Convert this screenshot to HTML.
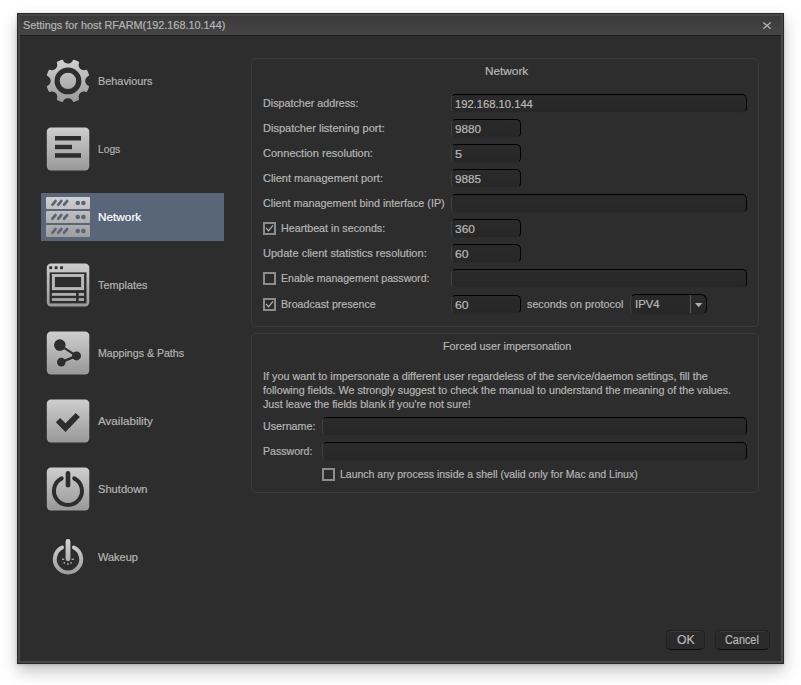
<!DOCTYPE html>
<html lang="en">
<head>
<meta charset="utf-8">
<title>Settings for host RFARM(192.168.10.144)</title>
<style>
html,body{margin:0;padding:0;background:#fff;}
body{width:801px;height:685px;position:relative;overflow:hidden;
  font-family:"Liberation Sans",sans-serif;font-size:11px;color:#b5b5b5;}
*{box-sizing:border-box;}
.abs{position:absolute;}
#win{position:absolute;left:17px;top:13px;width:767px;height:651px;background:#474747;
  border:1px solid #272727;box-shadow:0 7px 15px rgba(0,0,0,.24),0 1px 3px rgba(0,0,0,.18);}
#titlebar{position:absolute;left:2px;top:2px;right:2px;height:19px;
  background:linear-gradient(#3a3a3a,#454545);}
#titleline{position:absolute;left:2px;right:2px;top:21px;height:1px;background:#1c1c1c;}
#content{position:absolute;left:2px;right:2px;top:22px;bottom:2px;background:#2d2d2d;}
.t{position:absolute;white-space:nowrap;line-height:14px;height:14px;transform-origin:0 0;-webkit-text-stroke:0.2px;}
.side{color:#b4b4b4;}
.sel{position:absolute;left:41px;top:193px;width:183px;height:48px;background:#596679;}
.grp{position:absolute;border:1px solid #3a3a3a;border-radius:5px;}
.inp{position:absolute;height:19px;background:linear-gradient(#2a2a2a,#272727);border-radius:5px;
  border:1px solid #000;border-left-color:#404040;border-bottom-color:#2b2b2b;}
.cb{position:absolute;width:13px;height:13px;border:2px solid #8c8c8c;background:#2b2b2b;}
.btn{position:absolute;height:20px;border-radius:5px;background:#2a2a2a;
  border:1px solid #202020;border-bottom-color:#0e0e0e;box-shadow:inset 0 1px 0 #373737;}
svg{position:absolute;overflow:visible;}
</style>
</head>
<body>
<div id="win">
  <div id="titlebar"></div>
  <div id="titleline"></div>
  <div id="content"></div>
</div>

<!-- title -->
<svg style="left:762px;top:21px" width="10" height="9" viewBox="0 0 10 9"><path d="M1.3 1.5 L8.7 7.7 M8.7 1.5 L1.3 7.7" stroke="#b2b2b2" stroke-width="1.35" fill="none"/></svg>

<!-- sidebar -->
<div class="sel"></div>

<svg id="icons" style="left:0;top:0" width="801" height="685" viewBox="0 0 801 685">
  <defs>
    <linearGradient id="g" x1="0" y1="0" x2="0" y2="1"><stop offset="0" stop-color="#cecece"/><stop offset="1" stop-color="#989898"/></linearGradient>
    <linearGradient id="gn" gradientUnits="userSpaceOnUse" x1="0" y1="197" x2="0" y2="237"><stop offset="0" stop-color="#d0d0d0"/><stop offset="1" stop-color="#9e9e9e"/></linearGradient>
    <linearGradient id="gg" gradientUnits="userSpaceOnUse" x1="0" y1="59" x2="0" y2="103"><stop offset="0" stop-color="#d2d2d2"/><stop offset="1" stop-color="#989898"/></linearGradient>
    <linearGradient id="gw" gradientUnits="userSpaceOnUse" x1="0" y1="539" x2="0" y2="575"><stop offset="0" stop-color="#d6d6d6"/><stop offset="1" stop-color="#9a9a9a"/></linearGradient>
  </defs>
  <!-- gear -->
  <g id="gear">
    <path d="M48.01 85.48 L47.10 85.99 L46.90 86.31 L46.85 86.67 L46.99 87.24 L47.34 88.30 L48.14 90.24 L48.84 91.59 L49.08 91.86 L49.40 92.01 L49.77 92.03 L50.92 91.69 L51.95 91.58 L52.65 91.62 L53.36 91.77 L54.30 92.12 L54.93 92.48 L55.73 93.14 L56.37 93.92 L56.87 94.87 L57.09 95.52 L57.22 96.17 L57.27 96.87 L57.22 97.59 L56.81 99.24 L56.99 99.76 L57.26 100.01 L59.59 101.14 L61.57 101.85 L61.99 101.97 L62.35 101.99 L62.70 101.87 L62.96 101.63 L63.54 100.57 L64.19 99.76 L64.71 99.30 L65.29 98.92 L65.94 98.60 L66.90 98.31 L67.62 98.21 L68.63 98.24 L69.31 98.38 L69.96 98.60 L70.91 99.10 L71.69 99.74 L72.15 100.26 L73.04 101.75 L73.54 101.99 L73.91 101.97 L76.35 101.12 L78.25 100.22 L78.64 100.01 L78.91 99.77 L79.06 99.45 L79.08 99.08 L78.74 97.93 L78.63 96.90 L78.67 96.20 L78.81 95.52 L79.04 94.84 L79.52 93.95 L79.96 93.38 L80.69 92.69 L81.27 92.30 L81.92 91.98 L82.57 91.76 L83.25 91.62 L83.92 91.58 L84.61 91.62 L85.29 91.76 L86.11 92.03 L86.48 92.02 L86.95 91.74 L87.25 91.24 L87.76 90.24 L88.56 88.30 L89.02 86.86 L89.04 86.50 L88.92 86.15 L88.68 85.89 L87.62 85.31 L86.81 84.66 L86.35 84.14 L85.97 83.56 L85.65 82.91 L85.36 81.95 L85.26 81.23 L85.29 80.22 L85.43 79.54 L85.65 78.89 L86.15 77.94 L86.79 77.16 L87.31 76.70 L88.80 75.81 L89.04 75.31 L89.02 74.94 L88.17 72.50 L87.27 70.60 L87.06 70.21 L86.82 69.94 L86.50 69.79 L86.13 69.77 L84.98 70.11 L83.95 70.22 L83.25 70.18 L82.57 70.04 L81.89 69.81 L81.00 69.33 L80.43 68.89 L79.74 68.16 L79.35 67.58 L79.03 66.93 L78.81 66.28 L78.67 65.60 L78.63 64.90 L78.67 64.24 L78.81 63.56 L79.08 62.74 L79.07 62.37 L78.79 61.90 L78.29 61.60 L77.29 61.09 L75.35 60.29 L73.91 59.83 L73.55 59.81 L73.20 59.93 L72.94 60.17 L72.36 61.23 L71.71 62.04 L71.19 62.50 L70.61 62.88 L69.96 63.20 L69.00 63.49 L68.28 63.59 L67.27 63.56 L66.23 63.31 L65.59 63.05 L64.99 62.70 L64.44 62.27 L63.75 61.54 L62.86 60.05 L62.36 59.81 L61.99 59.83 L59.55 60.68 L57.65 61.58 L57.26 61.79 L56.99 62.03 L56.84 62.35 L56.82 62.72 L57.16 63.87 L57.27 64.90 L57.23 65.60 L57.09 66.28 L56.86 66.96 L56.38 67.85 L55.94 68.42 L55.21 69.11 L54.63 69.50 L54.01 69.81 L53.33 70.04 L52.65 70.18 L51.98 70.22 L51.29 70.18 L50.61 70.04 L49.79 69.77 L49.42 69.78 L48.95 70.06 L48.65 70.56 L48.14 71.56 L47.34 73.50 L46.88 74.94 L46.86 75.30 L47.09 75.79 L48.59 76.70 L49.32 77.39 L49.76 77.97 L50.24 78.86 L50.47 79.54 L50.64 80.54 L50.64 81.26 L50.54 81.95 L50.25 82.91 L49.95 83.54 L49.56 84.11 L49.11 84.64 L48.59 85.10 Z" fill="url(#gg)"/>
    <circle cx="67.95" cy="80.9" r="10.8" fill="none" stroke="#2d2d2d" stroke-width="5.2"/>
  </g>
  <!-- logs -->
  <rect x="46.8" y="127.6" width="42.5" height="42.8" rx="4.2" fill="url(#g)"/>
  <rect x="55" y="136" width="26" height="4.5" fill="#2d2d2d"/>
  <rect x="55" y="144.8" width="17" height="4.4" fill="#2d2d2d"/>
  <rect x="55" y="153.2" width="26" height="4.5" fill="#2d2d2d"/>
  <!-- network -->
  <g fill="url(#gn)">
    <rect x="46" y="197" width="44" height="12" rx="1"/>
    <rect x="46" y="211" width="44" height="12" rx="1"/>
    <rect x="46" y="225" width="44" height="12" rx="1"/>
  </g>
  <g stroke="#596679" stroke-width="2.8" stroke-linecap="round" fill="#596679">
    <path d="M52.5 204.7 L55.5 201.10000000000002 M58.3 204.7 L61.3 201.10000000000002 M64.1 204.7 L67.1 201.10000000000002"/>
    <path d="M52.5 218.7 L55.5 215.10000000000002 M58.3 218.7 L61.3 215.10000000000002 M64.1 218.7 L67.1 215.10000000000002"/>
    <path d="M52.5 232.7 L55.5 229.10000000000002 M58.3 232.7 L61.3 229.10000000000002 M64.1 232.7 L67.1 229.10000000000002"/>
  </g>
  <g fill="#596679">
    <circle cx="77.8" cy="203" r="2.3"/><circle cx="83.4" cy="203" r="2.3"/>
    <circle cx="77.8" cy="217" r="2.3"/><circle cx="83.4" cy="217" r="2.3"/>
    <circle cx="77.8" cy="231" r="2.3"/><circle cx="83.4" cy="231" r="2.3"/>
  </g>
  <!-- templates -->
  <rect x="46.8" y="263.6" width="42.5" height="42.8" rx="4.2" fill="url(#g)"/>
  <rect x="49.6" y="272.4" width="36.9" height="31" fill="#2d2d2d"/>
  <rect x="49.3" y="266.3" width="2.8" height="2.8" fill="#2d2d2d"/>
  <rect x="54.7" y="266.3" width="2.8" height="2.8" fill="#2d2d2d"/>
  <rect x="60.1" y="266.3" width="2.8" height="2.8" fill="#2d2d2d"/>
  <rect x="53.4" y="275.5" width="29.2" height="13.1" fill="none" stroke="#b8b8b8" stroke-width="3"/>
  <rect x="51.9" y="293" width="24.2" height="2.8" fill="#adadad"/>
  <rect x="78.7" y="293" width="5.3" height="2.8" fill="#adadad"/>
  <rect x="51.9" y="298.1" width="24.2" height="2.9" fill="#a5a5a5"/>
  <rect x="78.7" y="298.1" width="5.3" height="2.9" fill="#a5a5a5"/>
  <!-- mappings -->
  <rect x="46.8" y="331.6" width="42.5" height="42.8" rx="4.2" fill="url(#g)"/>
  <g fill="#2d2d2d" stroke="#2d2d2d">
    <path d="M59.8 345.1 L76.5 355.9 L61.3 362.1" fill="none" stroke-width="2.3"/>
    <circle cx="59.8" cy="345.1" r="5.8" stroke="none"/>
    <circle cx="76.5" cy="355.9" r="4.5" stroke="none"/>
    <circle cx="61.3" cy="362.1" r="4.3" stroke="none"/>
  </g>
  <!-- availability -->
  <rect x="46.8" y="399.6" width="42.5" height="42.8" rx="4.2" fill="url(#g)"/>
  <path d="M55.8 422.3 L60.1 418.1 L65.5 423.3 L75.7 413 L79.9 417.1 L65.5 431.9 Z" fill="#2d2d2d"/>
  <!-- shutdown -->
  <rect x="46.8" y="467.6" width="42.5" height="42.8" rx="4.2" fill="url(#g)"/>
  <g fill="none" stroke="#2d2d2d" stroke-linecap="round">
    <path d="M61.7 478.4 A14 14 0 1 0 74.2 478.4" stroke-width="4"/>
    <path d="M68 473.3 L68 485.2" stroke-width="4.6"/>
  </g>
  <!-- wakeup -->
  <g fill="none" stroke="url(#gw)" stroke-linecap="round">
    <path d="M62.1 547.5 A13.2 13.2 0 1 0 73.9 547.5" stroke-width="4"/>
    <path d="M68 541.5 L68 558.8" stroke-width="4.8"/>
  </g>
  <g fill="#a8a8a8">
    <rect x="62" y="558.6" width="2.2" height="1.4"/><rect x="71.6" y="558.6" width="2.2" height="1.4"/>
    <rect x="63.6" y="562" width="1.5" height="1.6"/><rect x="67.2" y="563.2" width="1.5" height="1.7"/><rect x="70.4" y="562" width="1.5" height="1.6"/>
  </g>
</svg>

<!-- group 1 -->
<div class="grp" style="left:251px;top:58px;width:508px;height:269px;"></div>

<div class="inp" style="left:451px;top:94px;width:296px;"></div>
<div class="inp" style="left:451px;top:119px;width:70px;"></div>
<div class="inp" style="left:451px;top:144px;width:70px;"></div>
<div class="inp" style="left:451px;top:169px;width:70px;"></div>
<div class="inp" style="left:451px;top:194px;width:296px;"></div>
<div class="inp" style="left:451px;top:219px;width:70px;"></div>
<div class="inp" style="left:451px;top:244px;width:70px;"></div>
<div class="inp" style="left:451px;top:269px;width:296px;"></div>
<div class="inp" style="left:451px;top:295px;width:70px;"></div>

<div class="cb" style="left:263px;top:222px;"></div>
<div class="cb" style="left:263px;top:272px;"></div>
<div class="cb" style="left:263px;top:298px;"></div>
<svg style="left:263px;top:222px" width="13" height="13" viewBox="0 0 13 13"><path d="M3.1 5.9 L5.5 8.8 L10 3.4" stroke="#bcbcbc" stroke-width="1.15" fill="none"/></svg>
<svg style="left:263px;top:298px" width="13" height="13" viewBox="0 0 13 13"><path d="M3.1 5.9 L5.5 8.8 L10 3.4" stroke="#bcbcbc" stroke-width="1.15" fill="none"/></svg>

<div class="inp" style="left:630px;top:294px;width:77px;height:21px;border-radius:6px;"></div>
<div class="abs" style="left:690px;top:295px;width:1px;height:18px;background:#5a5a5a;"></div>
<svg style="left:695px;top:303px" width="8" height="5" viewBox="0 0 8 5"><path d="M0 0 L7.4 0 L3.7 4.2 Z" fill="#b0b0b0"/></svg>

<!-- group 2 -->
<div class="grp" style="left:251px;top:333px;width:508px;height:160px;"></div>
<div class="inp" style="left:322px;top:417px;width:425px;"></div>
<div class="inp" style="left:322px;top:442px;width:425px;"></div>
<div class="cb" style="left:322px;top:468px;"></div>

<!-- buttons -->
<div class="btn" style="left:666px;top:630px;width:39px;"></div>
<div class="btn" style="left:715px;top:630px;width:55px;"></div>

<div class="t" style="left:22.70px;top:18px;transform:scaleX(0.9876);color:#b4b4b4;">Settings for host RFARM(192.168.10.144)</div>
<div class="t" style="left:98.20px;top:74px;transform:scaleX(0.9882);color:#b4b4b4;">Behaviours</div>
<div class="t" style="left:98.20px;top:142px;transform:scaleX(0.9305);color:#b4b4b4;">Logs</div>
<div class="t" style="left:98.20px;top:210px;transform:scaleX(1.0708);color:#ffffff;">Network</div>
<div class="t" style="left:97.90px;top:278px;transform:scaleX(0.9872);color:#b4b4b4;">Templates</div>
<div class="t" style="left:98.20px;top:346px;transform:scaleX(0.9632);color:#b4b4b4;">Mappings &amp; Paths</div>
<div class="t" style="left:97.90px;top:414px;transform:scaleX(1.0564);color:#b4b4b4;">Availability</div>
<div class="t" style="left:98.20px;top:482px;transform:scaleX(1.0115);color:#b4b4b4;">Shutdown</div>
<div class="t" style="left:97.90px;top:550px;transform:scaleX(1.0012);color:#b4b4b4;">Wakeup</div>
<div class="t" style="left:484.90px;top:64px;transform:scaleX(1.0708);">Network</div>
<div class="t" style="left:263.15px;top:96px;transform:scaleX(0.9757);">Dispatcher address:</div>
<div class="t" style="left:263.15px;top:121px;transform:scaleX(1.0053);">Dispatcher listening port:</div>
<div class="t" style="left:263.15px;top:146px;transform:scaleX(1.0044);">Connection resolution:</div>
<div class="t" style="left:263.15px;top:171px;transform:scaleX(0.9958);">Client management port:</div>
<div class="t" style="left:263.15px;top:196px;transform:scaleX(0.9808);">Client management bind interface (IP)</div>
<div class="t" style="left:281.40px;top:221px;transform:scaleX(0.9737);">Heartbeat in seconds:</div>
<div class="t" style="left:263.15px;top:246px;transform:scaleX(1.0028);">Update client statistics resolution:</div>
<div class="t" style="left:281.40px;top:271px;transform:scaleX(0.9595);">Enable management password:</div>
<div class="t" style="left:281.40px;top:296.5px;transform:scaleX(0.9679);">Broadcast presence</div>
<div class="t" style="left:526.80px;top:296.5px;transform:scaleX(0.9781);">seconds on protocol</div>
<div class="t" style="left:635.20px;top:296.5px;transform:scaleX(1.0310);color:#b8b8b8;">IPV4</div>
<div class="t" style="left:455.00px;top:97px;transform:scaleX(1.0181);color:#b8b8b8;">192.168.10.144</div>
<div class="t" style="left:455.00px;top:122px;transform:scaleX(1.0660);color:#b8b8b8;">9880</div>
<div class="t" style="left:455.00px;top:147px;transform:scaleX(1.1592);color:#b8b8b8;">5</div>
<div class="t" style="left:455.00px;top:172px;transform:scaleX(1.0660);color:#b8b8b8;">9885</div>
<div class="t" style="left:455.00px;top:222px;transform:scaleX(1.0839);color:#b8b8b8;">360</div>
<div class="t" style="left:455.00px;top:247px;transform:scaleX(1.1102);color:#b8b8b8;">60</div>
<div class="t" style="left:455.00px;top:297.5px;transform:scaleX(1.1102);color:#b8b8b8;">60</div>
<div class="t" style="left:442.70px;top:339px;transform:scaleX(0.9806);">Forced user impersonation</div>
<div class="t" style="left:262.90px;top:369px;transform:scaleX(0.9819);">If you want to impersonate a different user regardeless of the service/daemon settings, fill the</div>
<div class="t" style="left:262.90px;top:383px;transform:scaleX(0.9729);">following fields. We strongly suggest to check the manual to understand the meaning of the values.</div>
<div class="t" style="left:262.90px;top:397px;transform:scaleX(0.9748);">Just leave the fields blank if you're not sure!</div>
<div class="t" style="left:263.15px;top:419px;transform:scaleX(0.9750);">Username:</div>
<div class="t" style="left:263.15px;top:444px;transform:scaleX(0.9628);">Password:</div>
<div class="t" style="left:340.15px;top:467px;transform:scaleX(0.9545);">Launch any process inside a shell (valid only for Mac and Linux)</div>
<div class="t" style="left:676.60px;top:633px;transform:scaleX(1.0148);font-size:12px;color:#b8b8b8;">OK</div>
<div class="t" style="left:725.40px;top:633px;transform:scaleX(0.9047);font-size:12px;color:#b8b8b8;">Cancel</div>
</body>
</html>
